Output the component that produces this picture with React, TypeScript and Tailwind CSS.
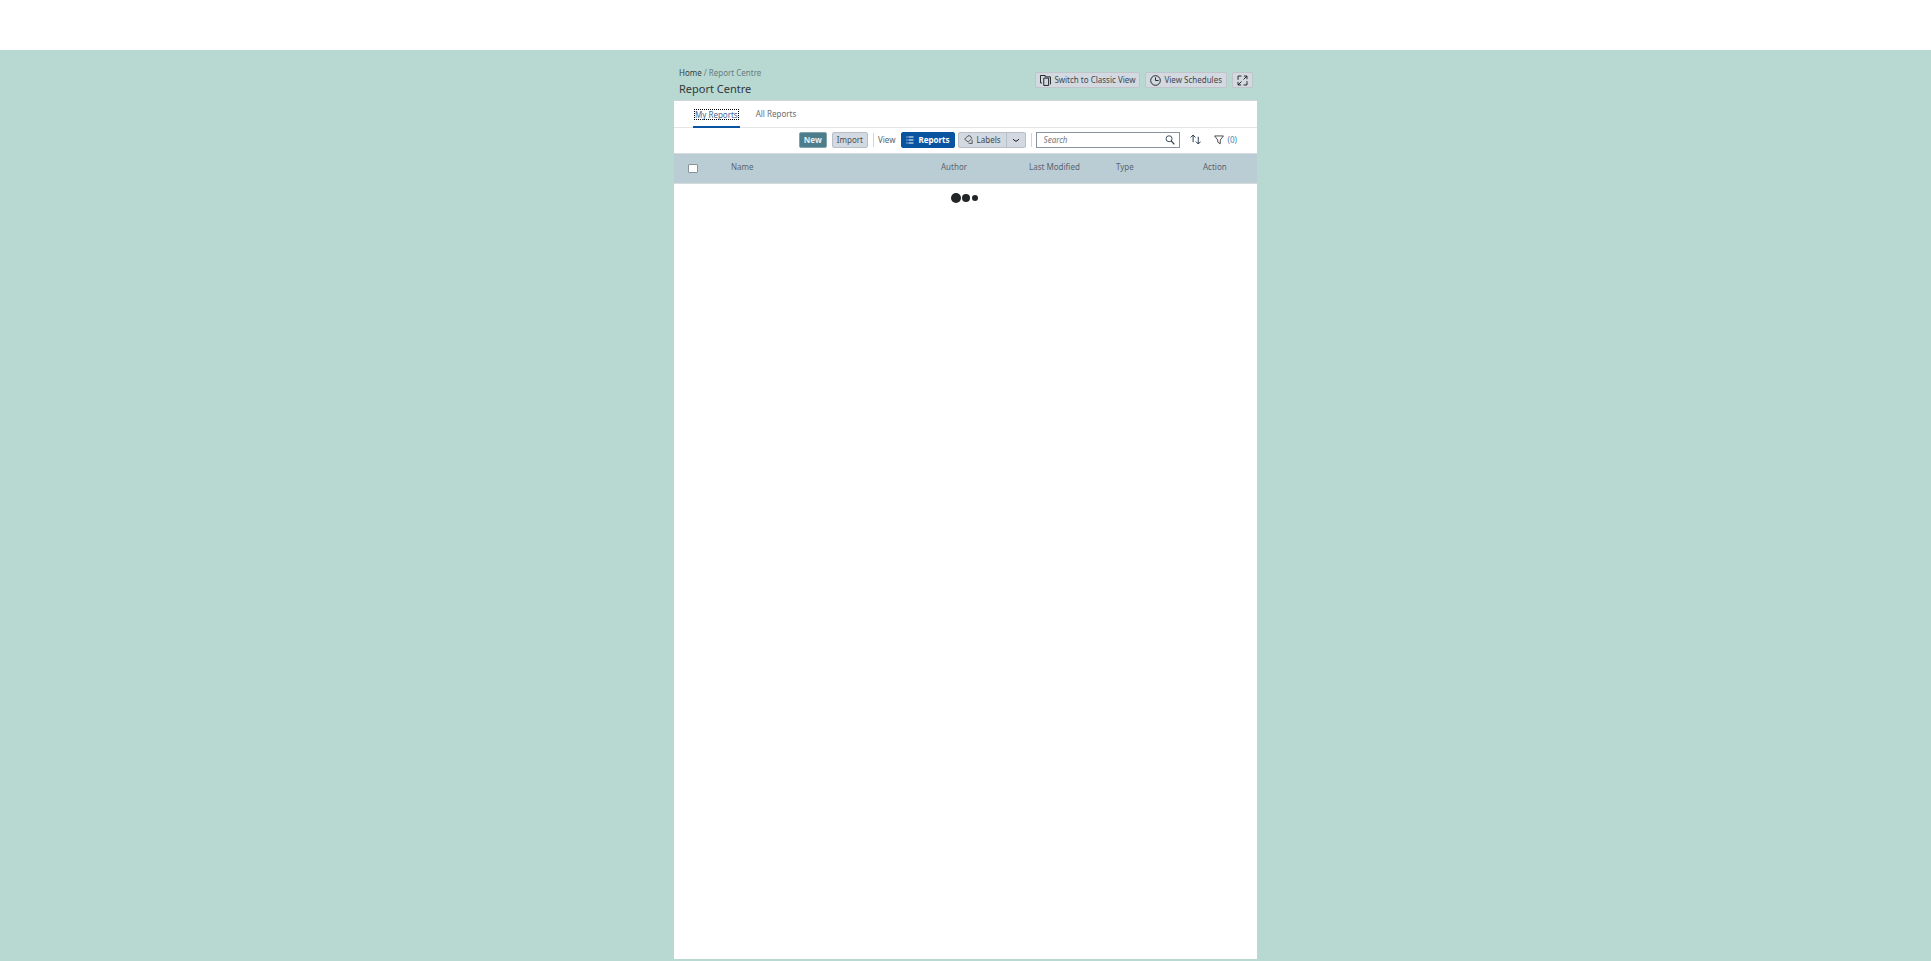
import React from 'react';

type IconProps = { className?: string };

function Icon({ className = 'size-3', children }: IconProps & { children: React.ReactNode }) {
  return (
    <svg
      viewBox="0 0 16 16"
      className={`shrink-0 ${className}`}
      fill="none"
      stroke="currentColor"
      strokeWidth="1.4"
      aria-hidden="true"
    >
      {children}
    </svg>
  );
}

const ghost =
  'flex h-4 items-center gap-[3px] rounded-xs border border-[#c1c5cb] bg-[#d2d9e0] text-[#41464d]';

function Header() {
  return (
    <header className="flex items-start justify-between px-1 pt-[17px] pb-px">
      <div className="pl-px">
        <nav aria-label="Breadcrumb" className="flex gap-[2px] leading-3 text-[#6a7a80]">
          <a href="#home" className="text-[#32423f]">Home</a>
          <span>/</span>
          <span>Report Centre</span>
        </nav>
        <h1 className="text-[11px] leading-5 text-[#32363a]">Report Centre</h1>
      </div>
      <div className="flex gap-[5px] pt-[5px]">
        <button type="button" className={`${ghost} px-1`}>
          <Icon className="size-[11px] text-[#1d2126]">
            <path d="M3 11.500H.7V.7H7.500v1.800" />
            <path d="M5.500 4.500h7v10.700h-7zM7.500 2.700h7.700v11" />
          </Icon>
          Switch to Classic View
        </button>
        <button type="button" className={`${ghost} px-1`}>
          <Icon className="size-[11px] text-[#1d2126]">
            <circle cx="8" cy="8" r="7" />
            <path d="M8 3.500V8h4.500" />
          </Icon>
          View Schedules
        </button>
        <button type="button" aria-label="Full screen" className={`${ghost} px-1`}>
          <Icon className="size-[11px] text-[#1d2126]">
            <path d="M6.500 1.500h-5V7M9.500 14.500h5V9" />
            <path d="M10 1.500h4.500V6M14.500 1.500l-5 5M6 14.500H1.500V10M1.500 14.500l5-5" />
          </Icon>
        </button>
      </div>
    </header>
  );
}

function Tabs() {
  return (
    <div role="tablist" className="flex h-7 gap-4 border-t border-b border-t-[#d2d6d8] border-b-[#e2e4e6] pl-[19px]">
      <button type="button" role="tab" aria-selected="true" className="-mb-px border-b-2 border-[#0854a0] px-px pt-px text-[#40699b]">
        <span className="block border border-dotted border-black leading-[9px]">My Reports</span>
      </button>
      <button type="button" role="tab" aria-selected="false" className="text-[#6a6d70]">
        All Reports
      </button>
    </div>
  );
}

function Toolbar() {
  return (
    <div className="flex h-[25px] items-center justify-end pr-5 pb-[2px]">
      <button type="button" className="h-4 rounded-xs border border-[#82a5ad] bg-[#4d7c8a] px-1 font-bold text-[#e8eff1]">New</button>
      <button type="button" className="ml-[5px] h-4 rounded-xs border border-[#b7c0c9] bg-[#d2d9e0] px-1 text-[#4a4f55]">Import</button>
      <span className="ml-[5px] h-[14px] w-px bg-[#d3d5d8]" />
      <span className="ml-1 text-[#5b5f64]">View</span>
      <button type="button" className="ml-[6px] flex h-4 items-center gap-1 rounded-xs border border-[#0854a0] bg-[#0854a0] px-1 font-bold text-white">
        <Icon className="size-2">
          <path d="M5 2h10M5 8h10M5 14h10M1 2h2M1 8h2M1 14h2" strokeWidth="2" />
        </Icon>
        Reports
      </button>
      <div className="ml-[3px] flex h-4 rounded-xs border border-[#b7c0c9] bg-[#d2d9e0] text-[#41464d]">
        <button type="button" className="flex items-center gap-1 px-[5px]">
          <Icon className="size-[9px] text-[#32363a]">
            <path d="M7 1.500h4l3 4.500-6.500 6.500L1 7.500z" />
            <path d="m8 14.500 2 .500h4.500V9" />
          </Icon>
          Labels
        </button>
        <button type="button" aria-label="More label options" className="flex items-center border-l border-[#b7c0c9] px-[5px]">
          <Icon className="size-[8px] text-[#1d2126]">
            <path d="m2 6 4 4h4l4-4" strokeWidth="2" />
          </Icon>
        </button>
      </div>
      <span className="ml-[5px] h-[14px] w-px bg-[#d3d5d8]" />
      <label className="ml-1 flex h-4 w-36 items-center border border-[#89919a] bg-white pr-1 pl-[7px]">
        <input
          type="text"
          aria-label="Search"
          placeholder="Search"
          className="min-w-0 flex-1 outline-none placeholder:text-[#74777a] placeholder:italic"
        />
        <Icon className="size-[10px] text-[#26384e]">
          <circle cx="6.500" cy="6" r="4.800" />
          <path d="m10 9.500 5 5.500" strokeWidth="2" />
        </Icon>
      </label>
      <button type="button" aria-label="Sort" className="ml-[10px] text-[#26384e]">
        <Icon className="size-[11px]">
          <path d="M4.500 12V1.500M1 5l3.500-3.500L8 5M12 4v10.500M8.500 11l3.500 3.500 3.500-3.500" />
        </Icon>
      </button>
      <button type="button" aria-label="Filter (0)" className="ml-[13px] flex items-center gap-1 text-[#4684b5]">
        <Icon className="size-[10px] text-[#32363a]">
          <path d="M1 1.500h14L10 8v6l-4-2.500V8z" />
        </Icon>
        (0)
      </button>
    </div>
  );
}

function ReportTable() {
  return (
    <table className="w-full table-fixed text-left text-[#5b6470]">
      <colgroup>
        <col className="w-[57px]" />
        <col />
        <col className="w-[88px]" />
        <col className="w-[87px]" />
        <col className="w-[87px]" />
        <col className="w-[54px]" />
      </colgroup>
      <thead>
        <tr className="h-[30px] border-t border-b border-t-[#d5dadd] border-b-[#d5dadd] bg-[#bacdd5]">
          <th className="pl-[14px]">
            <input
              type="checkbox"
              aria-label="Select all reports"
              className="block h-[9px] w-[10px] appearance-none rounded-[1px] border border-[#89919a] bg-white"
            />
          </th>
          <th className="pb-1 font-normal">Name</th>
          <th className="pb-1 font-normal">Author</th>
          <th className="pb-1 font-normal">Last Modified</th>
          <th className="pb-1 font-normal">Type</th>
          <th className="pb-1 font-normal">Action</th>
        </tr>
      </thead>
    </table>
  );
}

export default function App() {
  return (
    <div className="flex min-h-screen flex-col bg-white font-['Noto_Sans',sans-serif] text-[8px] leading-3">
      <div className="h-[50px]" />
      <main className="flex flex-1 flex-col bg-[#b8d9d2] pb-[2px]">
        <div className="mx-auto flex w-full max-w-[583px] flex-1 flex-col">
          <Header />
          <section className="flex-1 bg-white">
            <Tabs />
            <Toolbar />
            <ReportTable />
            <div role="status" aria-label="Loading" className="flex items-center justify-center gap-px pt-[9px] pr-[3px]">
              <span className="size-[10px] rounded-full bg-[#222527]" />
              <span className="size-2 rounded-full bg-[#222527]" />
              <span className="ml-px size-[6px] rounded-full bg-[#222527]" />
            </div>
          </section>
        </div>
      </main>
    </div>
  );
}
